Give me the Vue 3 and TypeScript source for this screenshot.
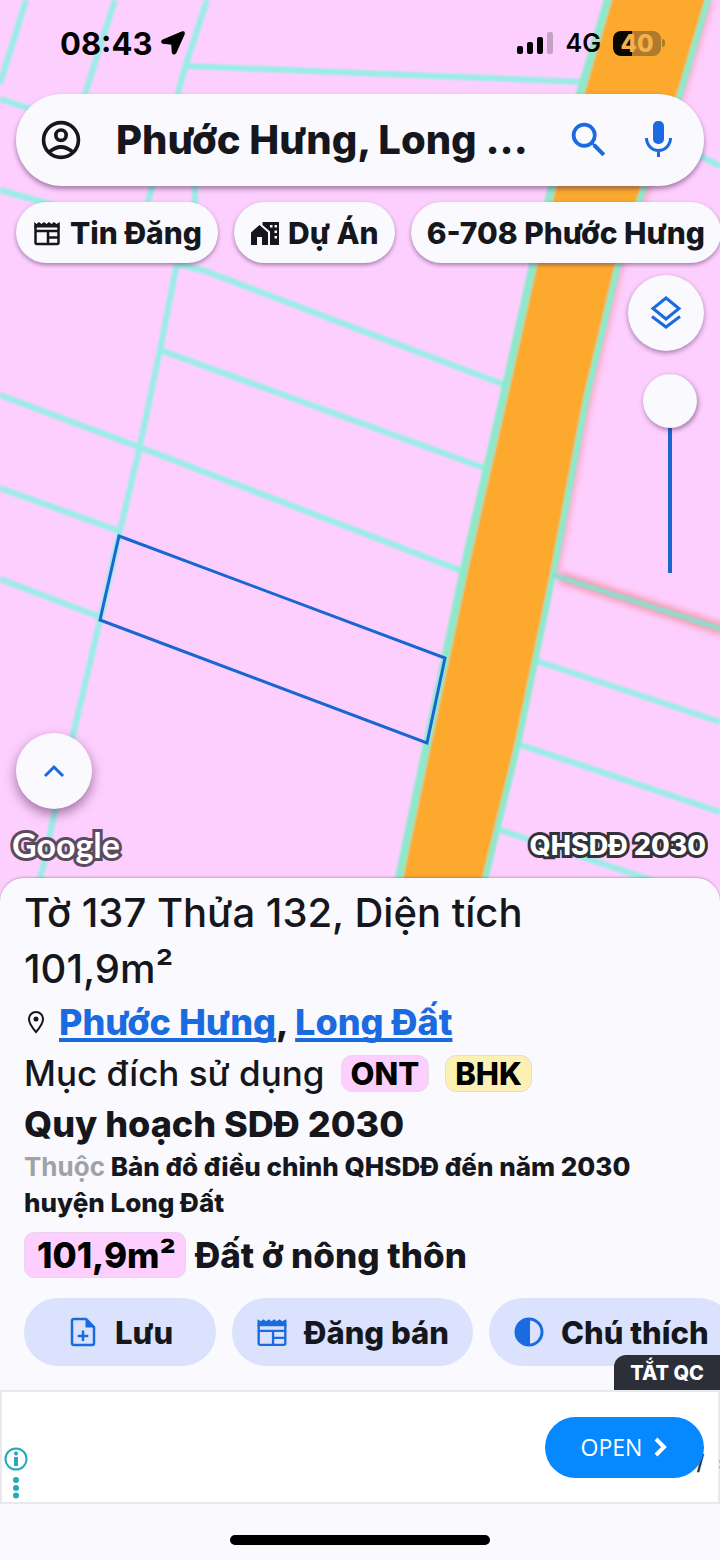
<script setup lang="ts">
import { ref } from 'vue'

const query = ref<string>('Phước Hưng, Long ...')
const opacity = ref<number>(0)

const parcelLines: string[] = [
  'M26 0 0 84',
  'M115 0 85 94 60 170',
  'M207 0 186 64 148 202',
  'M186 66 360 73 585 82',
  'M0 99 40 112',
  'M0 190 60 207',
  'M195 180V205',
  'M700 156 720 166',
  'M178 258 160 350 139 450 119 535 100 620 73 735 54 815 38 890',
  'M178 264 205 271 505 385',
  'M160 350 487 469',
  'M0 395 139 447 462 571',
  'M0 488 119 531',
  'M0 579 100 617',
  'M534 660 720 722',
  'M518 744 720 812',
  'M497 829 670 886'
]
</script>

<template>
  <main class="screen">
    <section class="map" aria-label="Bản đồ">
      <svg class="map-art" viewBox="0 0 720 900" preserveAspectRatio="xMinYMin slice" aria-hidden="true">
        <defs>
          <filter id="haze" x="-20%" y="-20%" width="140%" height="140%"><feGaussianBlur stdDeviation="3" /></filter>
          <filter id="soft" x="-5%" y="-5%" width="110%" height="110%"><feGaussianBlur stdDeviation="1" /></filter>
        </defs>
        <g fill="none" filter="url(#haze)" stroke="#f58fa0">
          <path d="M710 0 681 94 646 190 620 265 588 400 555 574" stroke-width="8" opacity=".6" />
          <path d="M560 577 724 630" stroke-width="12" opacity=".8" />
        </g>
        <g fill="none" filter="url(#soft)" stroke-linejoin="round">
          <path
            d="M609 -4 580 94 552 187 533 265 505 390 466 560 427 744 396 892 482 892 515 744 551 575 584 400 616 265 645 187 678 94 707 -4Z"
            fill="#fda92f"
          />
          <path v-for="line in parcelLines" :key="line" :d="line" stroke="#9aede6" stroke-width="6" />
          <path d="M609 -4 580 94 552 187 533 265 505 390 466 560 427 744 396 892" stroke="#8ee9cb" stroke-width="8" />
          <path d="M709 -4 680 94 644 187 618 265 586 400 553 575 518 744 482 892" stroke="#8aebcb" stroke-width="6" />
          <path d="M553 575 724 630" stroke="#8fdccb" stroke-width="5" />
        </g>
        <path d="M119 536 445 658 427 743 100 620Z" fill="none" stroke="#1a66d0" stroke-width="3" />
      </svg>

      <header class="status">
        <div class="status-left">
          <span class="clock">08:43</span>
          <svg width="26" height="26" viewBox="0 0 26 26" aria-hidden="true">
            <path
              d="M22.500 2 2.500 10.500Q1 12 3 13L12 14 12.500 22.500Q13.500 25 15.500 23L24 4Q24.500 1.500 22.500 2Z"
              fill="#000"
              stroke="#000"
              stroke-width="1.500"
            />
          </svg>
        </div>
        <div class="status-right">
          <svg width="38" height="24" viewBox="0 0 38 24" aria-hidden="true">
            <rect x="1" y="15" width="6" height="8" rx="2" />
            <rect x="11" y="11" width="6" height="12" rx="2" />
            <rect x="21" y="6" width="6" height="17" rx="2" />
            <rect x="31" y="1" width="6" height="22" rx="2" opacity=".22" />
          </svg>
          <span class="network">4G</span>
          <span class="battery"><span>40</span></span>
        </div>
      </header>

      <form class="search" role="search" @submit.prevent>
        <button class="plain account" type="button" aria-label="Tài khoản">
          <svg width="46" height="46" viewBox="0 0 24 24" fill="none" stroke="#15171c" stroke-width="1.900" aria-hidden="true">
            <circle cx="12" cy="12" r="9.100" />
            <circle cx="12" cy="9.500" r="2.700" />
            <path d="M5.800 18.300Q12 13 18.200 18.300" />
          </svg>
        </button>
        <input v-model="query" class="query" type="text" aria-label="Tìm kiếm" />
        <button class="plain" type="submit" aria-label="Tìm">
          <svg width="46" height="46" viewBox="0 0 24 24" aria-hidden="true">
            <path
              fill="#1a6be0"
              d="M15.500 14h-.79l-.28-.27A6.471 6.471 0 0 0 16 9.500 6.500 6.500 0 1 0 9.500 16c1.610 0 3.090-.59 4.230-1.570l.27.28v.79l5 4.990L20.490 19l-4.990-5zm-6 0C7.010 14 5 11.990 5 9.500S7.010 5 9.500 5 14 7.010 14 9.500 11.990 14 9.500 14z"
            />
          </svg>
        </button>
        <button class="plain" type="button" aria-label="Tìm bằng giọng nói">
          <svg width="44" height="44" viewBox="0 0 44 44" fill="none" aria-hidden="true">
            <rect x="17" y="3" width="11" height="23" rx="5" fill="#1a6be0" />
            <path d="M10.500 20A12 12.500 0 0 0 34.500 20M22.500 32V39" stroke="#1a6be0" stroke-width="3" />
          </svg>
        </button>
      </form>

      <nav class="chips" aria-label="Bộ lọc">
        <button class="chip" type="button">
          <svg width="30" height="30" viewBox="0 0 30 30" fill="none" stroke="#15171c" stroke-width="2.500" aria-hidden="true">
            <path d="M3.500 8V24.500Q3.500 26 5 26H25Q26.500 26 26.500 24.500V8M3.500 13H26.500M16 19.500H26.500M16 13V26" />
            <path d="M2.200 9.500V4L4.500 6 7 4 9.500 6 12 4 14.500 6 17 4 19.500 6 22 4 24.500 6 27.800 4V9.500Z" fill="#15171c" stroke="none" />
          </svg>
          Tin Đăng
        </button>
        <button class="chip" type="button">
          <svg width="30" height="30" viewBox="0 0 30 30" aria-hidden="true">
            <path fill="#15171c" d="M1 14.500 9.500 7 18 14.500V27H12V19H7V27H1Z" />
            <path
              fill="#15171c"
              fill-rule="evenodd"
              d="M12.500 4H29V27H20V13.500L12.500 7ZM20 7V9.500H22.500V7ZM24.500 7V9.500H27V7ZM24.500 12.500V15H27V12.500ZM24.500 18V20.500H27V18Z"
            />
          </svg>
          Dự Án
        </button>
        <button class="chip" type="button">6-708 Phước Hưng</button>
      </nav>

      <div class="tools">
        <button class="round" type="button" aria-label="Lớp bản đồ">
          <svg width="34" height="36" viewBox="0 0 34 36" fill="none" stroke="#1a6be0" stroke-width="3" aria-hidden="true">
            <path d="M17 3 30 13.500 17 24 4 13.500ZM3 21.500 17 32 31 21.500" />
          </svg>
        </button>
        <input v-model.number="opacity" class="slider" type="range" min="0" max="100" aria-label="Độ trong suốt" />
      </div>

      <div class="map-foot">
        <button class="round raised" type="button" aria-label="Mở rộng">
          <svg width="24" height="18" viewBox="0 0 24 18" fill="none" stroke="#1a6be0" stroke-width="3" aria-hidden="true">
            <path d="M3 14 12 5 21 14" />
          </svg>
        </button>
        <div class="credits">
          <span class="google">Google</span>
          <span class="layer-name">QHSDĐ 2030</span>
        </div>
      </div>
    </section>

    <section class="sheet">
      <h1 class="title">Tờ 137 Thửa 132, Diện tích<br />101,9m²</h1>
      <p class="place">
        <svg width="24" height="28" viewBox="0 0 24 28" fill="none" stroke="#15171c" stroke-width="2" aria-hidden="true">
          <path d="M12 24Q5 16 5 11A7 7 0 0 1 19 11Q19 16 12 24Z" />
          <circle cx="12" cy="11" r="2.500" fill="#15171c" stroke="none" />
        </svg>
        <span><a href="#phuoc-hung">Phước Hưng</a>, <a href="#long-dat">Long Đất</a></span>
      </p>
      <p class="usage">
        Mục đích sử dụng
        <span class="tag pink">ONT</span>
        <span class="tag yellow">BHK</span>
      </p>
      <h2 class="plan">Quy hoạch SDĐ 2030</h2>
      <p class="source"><span class="muted">Thuộc</span> Bản đồ điều chỉnh QHSDĐ đến năm 2030 huyện Long Đất</p>
      <p class="area"><span class="amount">101,9m²</span> Đất ở nông thôn</p>

      <div class="actions">
        <button class="action" type="button">
          <svg width="32" height="32" viewBox="0 0 32 32" fill="none" stroke="#1a6be0" stroke-width="2.500" aria-hidden="true">
            <path d="M7 3H19L27 11V27Q27 29 25 29H7Q5 29 5 27V5Q5 3 7 3ZM16 14.500V25M10.700 20H21.300" />
            <path d="M18.500 2 28 11.500H18.500Z" fill="#1a6be0" stroke="none" />
          </svg>
          Lưu
        </button>
        <button class="action" type="button">
          <svg width="32" height="32" viewBox="0 0 30 30" fill="none" stroke="#1a6be0" stroke-width="2.200" aria-hidden="true">
            <path d="M2.500 8V25.500Q2.500 27 4 27H26Q27.500 27 27.500 25.500V8M2.500 14H27.500M16 20.500H27.500M16 14V27" />
            <path d="M1.400 9.500V3L4.500 5 7 3 9.500 5 12 3 14.500 5 17 3 19.500 5 22 3 24.500 5 28.600 3V9.500Z" fill="#1a6be0" stroke="none" />
          </svg>
          Đăng bán
        </button>
        <button class="action" type="button">
          <svg width="32" height="32" viewBox="0 0 32 32" aria-hidden="true">
            <circle cx="16" cy="16" r="13" fill="none" stroke="#1a6be0" stroke-width="3" />
            <path d="M17 2.500V29.500H16A13.500 13.500 0 0 1 16 2.500Z" fill="#1a6be0" />
          </svg>
          Chú thích
        </button>
      </div>
      <button class="dismiss" type="button">TẮT QC</button>
    </section>

    <aside class="ad" aria-label="Quảng cáo">
      <svg class="ad-info" width="26" height="56" viewBox="0 0 26 56" fill="#22abb8" aria-hidden="true">
        <circle cx="13" cy="13" r="10.500" fill="none" stroke="#22abb8" stroke-width="2" />
        <circle cx="13" cy="7.500" r="2" />
        <rect x="11" y="11" width="4" height="9" />
        <circle cx="13" cy="34" r="3" />
        <circle cx="13" cy="42" r="3" />
        <circle cx="13" cy="49.500" r="3" />
      </svg>
      <span class="ad-copy"><span>/</span><span>s</span></span>
      <button class="open" type="button">
        OPEN
        <svg width="14" height="20" viewBox="0 0 14 20" fill="none" stroke="#fff" stroke-width="4" aria-hidden="true">
          <path d="M2 2 10 10 2 18" />
        </svg>
      </button>
    </aside>

    <footer class="home"><span></span></footer>
  </main>
</template>

<style>
body {
  background: #faf9fe;
}
</style>

<style scoped>
.screen {
  display: flex;
  flex-direction: column;
  min-height: 100vh;
  overflow: hidden;
  background: #faf9fe;
  color: #15171c;
  font-family: Inter, "Noto Sans", sans-serif;
}
.screen *,
.screen *::before {
  box-sizing: border-box;
}
button {
  margin: 0;
  border: 0;
  font: inherit;
  color: inherit;
  white-space: nowrap;
  cursor: pointer;
}
svg {
  display: block;
  flex: none;
}
p,
h1,
h2 {
  margin: 0;
}
.map {
  position: relative;
  display: flex;
  flex: 1;
  flex-direction: column;
  isolation: isolate;
  background: #fdcffe;
}
.map-art {
  position: absolute;
  inset: 0;
  z-index: -1;
  width: 100%;
  height: 100%;
}
.status {
  display: flex;
  align-items: center;
  justify-content: space-between;
  height: 86px;
  margin-bottom: 8px;
  padding: 0 59px 0 60px;
  color: #000;
}
.status-left,
.status-right {
  display: flex;
  align-items: center;
  gap: 8px;
}
.status-right {
  gap: 12px;
}
.clock {
  font-size: 31px;
  font-weight: 700;
}
.network {
  font-size: 25px;
  font-weight: 600;
}
.battery {
  position: relative;
  display: grid;
  place-items: center;
  width: 48px;
  height: 25px;
  border-radius: 8px;
  background: linear-gradient(90deg, #0a0600 40%, #b07a2c 40%);
  color: #f8b04c;
  font-size: 24px;
  font-weight: 800;
  line-height: 25px;
}
.battery::before {
  content: "";
  position: absolute;
  left: 49px;
  width: 3px;
  height: 8px;
  border-radius: 0 3px 3px 0;
  background: #b07a2c;
}
.search {
  display: flex;
  align-items: center;
  height: 92px;
  margin: 0 16px;
  padding: 0 24px 0 22px;
  border-radius: 46px;
  background: #faf9fe;
  box-shadow: 0 3px 5px rgba(60, 20, 70, 0.45);
}
.plain {
  padding: 0;
  background: none;
}
.plain + .plain {
  margin-left: 24px;
}
.account {
  margin-right: 32px;
}
.query {
  flex: 1;
  min-width: 0;
  padding: 0;
  border: 0;
  outline: 0;
  background: none;
  color: inherit;
  font: 800 40px/52px Inter, "Noto Sans", sans-serif;
}
.chips {
  display: flex;
  gap: 16px;
  margin-top: 16px;
  padding: 0 16px;
}
.chip {
  display: flex;
  flex: none;
  align-items: center;
  gap: 8px;
  height: 61px;
  padding: 0 16px;
  border-radius: 31px;
  background: #faf9fe;
  box-shadow: 0 2px 4px rgba(60, 20, 70, 0.45);
  font-size: 30px;
  font-weight: 800;
}
.tools {
  display: flex;
  flex-direction: column;
  align-items: flex-end;
  gap: 23px;
  margin-top: 12px;
  padding-right: 16px;
}
.round {
  display: grid;
  place-items: center;
  width: 76px;
  height: 76px;
  padding: 0;
  border-radius: 50%;
  background: #faf9fe;
  box-shadow: 0 2px 5px rgba(60, 20, 70, 0.45);
}
.round.raised {
  box-shadow: 0 5px 12px rgba(60, 20, 70, 0.5);
}
.slider {
  appearance: none;
  writing-mode: vertical-lr;
  width: 54px;
  height: 199px;
  margin: 0 7px 0 0;
  border-radius: 2px;
  background: linear-gradient(#1a66d0, #1a66d0) center / 4px 100% no-repeat;
}
.slider::-webkit-slider-thumb {
  appearance: none;
  width: 54px;
  height: 54px;
  border: 0;
  border-radius: 50%;
  background: #faf9fe;
  box-shadow: 1px 2px 5px rgba(60, 20, 70, 0.5);
}
.map-foot {
  display: flex;
  flex-direction: column;
  gap: 17px;
  margin-top: auto;
  padding: 24px 14px 36px 16px;
}
.credits {
  display: flex;
  align-items: center;
  justify-content: space-between;
  height: 38px;
  margin-left: -4px;
  color: #fff;
  paint-order: stroke fill;
}
.google {
  font: 700 34px/38px Lato, sans-serif;
  -webkit-text-stroke: 6px #5b4b5d;
}
.layer-name {
  font-size: 27px;
  font-weight: 800;
  -webkit-text-stroke: 6px #333238;
}
.sheet {
  position: relative;
  display: flow-root;
  margin-top: -22px;
  padding: 7px 24px 24px;
  border-radius: 24px 24px 0 0;
  background: #faf9fe;
  box-shadow: 0 -1px 2px rgba(60, 20, 70, 0.25);
}
.title {
  font-size: 40px;
  font-weight: 500;
  line-height: 56px;
}
.place {
  display: flex;
  align-items: center;
  gap: 11px;
  font-size: 36px;
  font-weight: 800;
  line-height: 50px;
}
.place a {
  color: #1a6be0;
  text-decoration: underline;
  text-decoration-thickness: 4px;
  text-decoration-skip-ink: none;
  text-underline-offset: 3px;
}
.usage {
  display: flex;
  align-items: center;
  gap: 16px;
  font-size: 35px;
  font-weight: 500;
  line-height: 52px;
}
.tag {
  padding: 0 9px;
  border: 1px solid #e6d9e6;
  border-radius: 11px;
  color: #000;
  font-size: 31px;
  font-weight: 800;
  line-height: 35px;
}
.pink,
.amount {
  background: #fdcffe;
}
.yellow {
  background: #fcf0b2;
}
.plan {
  font-size: 36px;
  font-weight: 800;
  line-height: 50px;
}
.source {
  font-size: 26px;
  font-weight: 800;
  line-height: 36px;
}
.muted {
  color: #a2a2a6;
  font-weight: 700;
}
.area {
  display: flex;
  align-items: center;
  gap: 9px;
  margin-top: 11px;
  font-size: 35px;
  font-weight: 800;
  line-height: 46px;
}
.amount {
  padding: 0 9px 0 12px;
  border: 1px solid #ecd2f0;
  border-radius: 10px;
  color: #000;
  line-height: 44px;
}
.actions {
  display: flex;
  gap: 16px;
  margin: 20px -24px 0 0;
  overflow: hidden;
}
.action {
  display: flex;
  flex: none;
  align-items: center;
  justify-content: center;
  gap: 16px;
  min-width: 192px;
  height: 68px;
  padding: 0 24px;
  border-radius: 34px;
  background: #dae2fd;
  font-size: 31px;
  font-weight: 800;
}
.dismiss {
  position: absolute;
  right: 0;
  bottom: 0;
  height: 35px;
  padding: 0 16px;
  border-radius: 12px 0 0;
  background: #2c2f38;
  color: #fff;
  font-size: 20px;
  font-weight: 800;
}
.ad {
  position: relative;
  display: flex;
  align-items: center;
  justify-content: space-between;
  height: 114px;
  padding: 0 14px 0 1px;
  border: 2px solid #e9e8ec;
  background: #fff;
}
.ad-info {
  align-self: flex-end;
}
.ad-copy {
  position: absolute;
  right: -12px;
  bottom: 27px;
  display: flex;
  gap: 14px;
  color: #333;
  font-size: 21px;
  font-weight: 600;
  line-height: 24px;
}
.open {
  position: relative;
  display: flex;
  align-items: center;
  justify-content: center;
  gap: 12px;
  width: 159px;
  height: 61px;
  padding: 0;
  border-radius: 31px;
  background: #0688fe;
  color: #fff;
  font-family: "Open Sans", sans-serif;
  font-size: 23px;
}
.home {
  display: grid;
  place-items: center;
  height: 56px;
  padding-top: 16px;
}
.home span {
  width: 36%;
  height: 10px;
  border-radius: 5px;
  background: #000;
}
</style>
